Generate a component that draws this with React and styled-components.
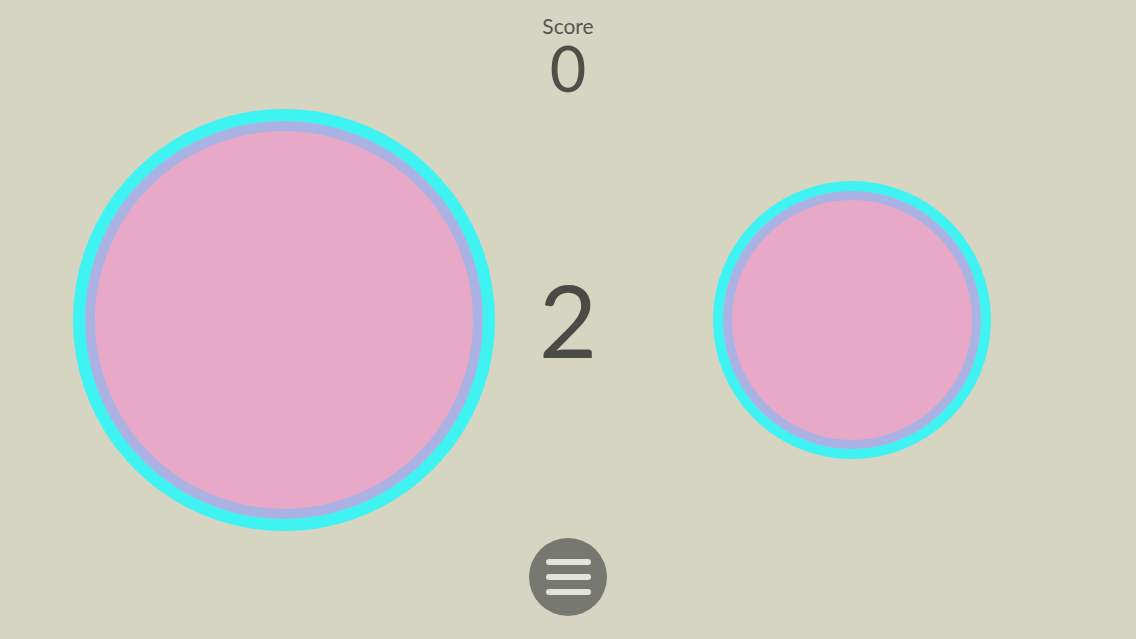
import React from "react";
import styled, { createGlobalStyle } from "styled-components";

const GlobalStyle = createGlobalStyle`
  html, body {
    margin: 0;
    padding: 0;
    background: #d6d5c1;
    font-family: Lato, "Open Sans", sans-serif;
    overflow: hidden;
  }
`;

function App() {
  return (
    <>
      <GlobalStyle />
      <Screen>
        <Header>
          <ScoreLabel>Score</ScoreLabel>
          <ScoreValue>0</ScoreValue>
        </Header>
        <Bubble $size={422} $ring={12} $inner={10} $col="1 / 3" />
        <Countdown>2</Countdown>
        <Bubble $size={278} $ring={10} $inner={9} $col="3 / 5" />
        <Footer>
          <MenuButton aria-label="menu">
            <Bar />
            <Bar />
            <Bar />
          </MenuButton>
        </Footer>
      </Screen>
    </>
  );
}

const Screen = styled.div`
  width: 100vw;
  height: 100vh;
  display: grid;
  grid-template-columns: repeat(4, 1fr);
  grid-template-rows: 108px 1fr 108px;
  background: #d6d5c1;
`;

const Header = styled.div`
  grid-column: 1 / 5;
  grid-row: 1;
  display: flex;
  flex-direction: column;
  align-items: center;
  padding-top: 14px;
  color: #4f4f4a;
`;

const ScoreLabel = styled.div`
  font-size: 21px;
  line-height: 23px;
  color: #55554f;
`;

const ScoreValue = styled.div`
  font-size: 63px;
  line-height: 61px;
  font-weight: 400;
`;

const Bubble = styled.div`
  grid-row: 2;
  grid-column: ${(p) => p.$col};
  justify-self: center;
  align-self: center;
  width: ${(p) => p.$size}px;
  height: ${(p) => p.$size}px;
  box-sizing: border-box;
  border-radius: 50%;
  background: #e8a8c8;
  border: ${(p) => p.$ring}px solid #3ff3f3;
  box-shadow: inset 0 0 0 ${(p) => p.$inner}px #a9b2e2;
`;

const Countdown = styled.div`
  grid-row: 2;
  grid-column: 2 / 4;
  justify-self: center;
  align-self: center;
  font-size: 101px;
  line-height: 1;
  color: #4b4b46;
`;

const Footer = styled.div`
  grid-column: 1 / 5;
  grid-row: 3;
  display: flex;
  justify-content: center;
  padding-top: 7px;
`;

const MenuButton = styled.div`
  width: 78px;
  height: 78px;
  border-radius: 50%;
  background: #787873;
  display: flex;
  flex-direction: column;
  align-items: center;
  justify-content: center;
  gap: 9px;
`;

const Bar = styled.div`
  width: 45px;
  height: 6px;
  border-radius: 3px;
  background: #e4e3da;
`;

export default App;
